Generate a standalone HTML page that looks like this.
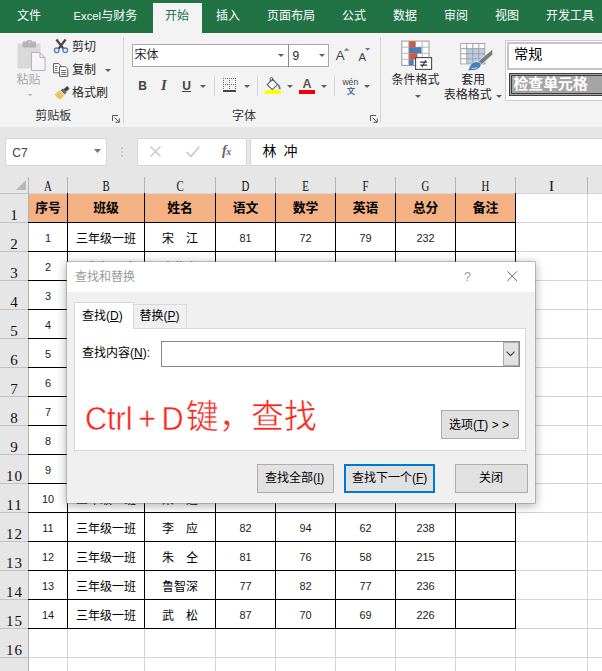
<!DOCTYPE html>
<html lang="zh-CN">
<head>
<meta charset="utf-8">
<title>Excel - 查找和替换</title>
<style>
html,body{margin:0;padding:0;width:602px;height:671px;overflow:hidden}
#app{position:absolute;left:0;top:0;width:602px;height:671px;overflow:hidden;background:#fff}
body{position:relative;background:#fff;
 font-family:"Liberation Sans","Noto Sans CJK SC",sans-serif;font-size:12px;line-height:1;color:#262626}
.a,.a>*{position:absolute}
.a>.z,.t>.z,.t{position:static}
.t{position:absolute;white-space:nowrap;line-height:1}
svg.i{position:absolute;overflow:visible}
/* tab bar */
#tabs{left:0;top:0;width:602px;height:33px;background:#217346;color:#fff}
#tabs .t{top:10px;font-size:12px}
#tabs .on{left:153px;top:3px;width:49px;height:30px;background:#f3f3f3}
/* ribbon */
#rib{left:0;top:33px;width:602px;height:94px;background:#f3f3f3;color:#262626}
#rib .sep{width:1px;background:#d2d2d2}
#rib .lbl{font-size:12px;color:#333}
/* formula bar */
#fx{left:0;top:127px;width:602px;height:49px;background:#e6e6e6}
#fx .box{background:#fff;top:11px;height:27px;border:1px solid #d6d6d6;box-sizing:border-box}
#rib .t{font-size:12px}
.ar{position:absolute;width:0;height:0;margin-left:-.3px;border-left:3.1px solid transparent;border-right:3.1px solid transparent;border-top:3.4px solid #5e5e5e}
#rib .vs{position:absolute;width:1px;background:#d4d4d4}
.lch{position:absolute;width:8px;height:8px}
/* grid */
#grid{left:0;top:0;width:602px;height:671px}
#grid .hb{background:#e6e6e6}
#grid .gv{top:193px;width:1px;height:478px;background:#d4d4d4}
#grid .gh{left:28px;width:574px;height:1px;background:#d4d4d4}
#grid .hv{top:177px;width:1px;height:16px;background:#b4b4b4}
#grid .hh{left:0;width:28px;height:1px;background:#c2c2c2}
#grid .hvl{top:193px;width:1px;height:478px;background:#b4b4b4}
#grid .ch{top:178.6px;text-align:center;font:15px/1 "Liberation Serif",serif;color:#111;transform:scaleX(.72)}
#grid .rn{left:0;width:28px;text-align:center;font:15px/1 "Liberation Serif",serif;color:#111;letter-spacing:1.2px;text-indent:1.2px}
#grid .th{background:#f4b183}
#grid .bv{top:193px;width:1px;height:436px;background:#000}
#grid .bh{left:28px;width:488px;height:1px;background:#000}
#grid .c{text-align:center;font-size:12px;line-height:1;color:#000;white-space:nowrap}
#grid .n{font:10.9px/12px "Liberation Sans",sans-serif;font-weight:normal;color:#1a1a1a}
/* formula bar */
#fx .t{color:#444}
/* dialog */
#dlg{left:67px;top:262px;width:468px;height:241px;background:#f0f0f0;
 box-shadow:0 0 0 1px rgba(140,140,140,.5),0 2px 9px 1px rgba(0,0,0,.3)}
#dlg .in{left:-1px;top:-1px;width:469px;height:242px}
#dlg .t{font-size:12px;color:#000}
#dlg .ttl{left:1px;top:1px;width:468px;height:29.5px;background:#fff}
#dlg .pg{background:#fff;border:1px solid #d9d9d9;box-sizing:border-box}
#dlg .btn{background:#e1e1e1;border:1px solid #adadad;box-sizing:border-box}
#dlg u{text-decoration:underline;text-underline-offset:1px}
#dlg .red{font-size:32.2px;color:#f5281c;-webkit-text-stroke:.45px #fff}
#grid .hd{font-size:12.8px;font-weight:bold}
#grid .ch.w{transform:none}

</style>
</head>
<body>
<div id="app">
<div id="tabs" class="a">
<div class="on"></div>
<span class="t" style="left:17px">文件</span>
<span class="t" style="left:73.5px"><span style="font-size:11.3px">Excel</span>与财务</span>
<span class="t" style="left:165px;color:#217346">开始</span>
<span class="t" style="left:216px">插入</span>
<span class="t" style="left:267px">页面布局</span>
<span class="t" style="left:342px">公式</span>
<span class="t" style="left:393px">数据</span>
<span class="t" style="left:444px">审阅</span>
<span class="t" style="left:495px">视图</span>
<span class="t" style="left:546px">开发工具</span>
</div>

<div id="rib" class="a">
<!-- clipboard group -->
<svg class="i" style="left:16px;top:7px" width="31" height="32" viewBox="0 0 31 32">
 <rect x="1.5" y="3.5" width="23" height="25" rx="1" fill="#d9d9d9"/>
 <rect x="6.5" y="1.5" width="13.5" height="6" rx="1" fill="#b4b4b4"/>
 <rect x="10.8" y="0" width="5" height="3" rx="1.2" fill="#b4b4b4"/><rect x="12.3" y="1.4" width="2" height="1.6" fill="#d9d9d9"/>
 <path d="M15.5 12.5h8.5l5 5v13h-13.5z" fill="#f7f4f8" stroke="#b8b1bb" stroke-width="1"/>
 <path d="M24 12.5v5h5" fill="none" stroke="#b8b1bb" stroke-width="1"/>
</svg>
<span class="t" style="left:16.5px;top:41px;color:#a8a8a8">粘贴</span>
<svg class="i" style="left:28.2px;top:61.2px" width="4.4" height="2.2" viewBox="0 0 4 2"><path d="M0 0h4L2 2z" fill="#b4b4b4"/></svg>
<!-- cut -->
<svg class="i" style="left:53px;top:6px" width="16" height="15" viewBox="0 0 16 15">
 <path d="M3.4 0.5L10.4 9.6M12.6 0.5L5.6 9.6" stroke="#444" stroke-width="2.2" fill="none"/>
 <circle cx="3.7" cy="11.3" r="2.3" fill="none" stroke="#4a7ebb" stroke-width="1.3"/>
 <circle cx="12.3" cy="11.3" r="2.3" fill="none" stroke="#4a7ebb" stroke-width="1.3"/>
</svg>
<span class="t" style="left:72px;top:8.4px">剪切</span>
<!-- copy -->
<svg class="i" style="left:52.5px;top:30px" width="16" height="14" viewBox="0 0 16 14">
 <path d="M0.6 0.6h5.2l2 2v7.2h-7.2z" fill="#fff" stroke="#5a5a5a" stroke-width="1"/>
 <path d="M6.6 3.6h5.6l2.6 2.6v7.2h-8.2z" fill="#fff" stroke="#5a5a5a" stroke-width="1"/>
 <path d="M2 3.5h2.5M2 5.5h2.5M2 7.5h2.5M8.2 7.5h5M8.2 9.5h5M8.2 11.5h5" stroke="#6a6a6a" stroke-width="1"/>
</svg>
<span class="t" style="left:72px;top:31.1px">复制</span>
<i class="ar" style="left:105.7px;top:36.3px"></i>
<!-- format painter -->
<svg class="i" style="left:53.5px;top:52.5px" width="16" height="14" viewBox="0 0 16 14">
 <path d="M9.5 3.2L13.2 0l2.3 2.4-3.4 3.4z" fill="#444"/>
 <path d="M6.6 4.2l2.4-1.6 3.6 3.8-1.6 2.2z" fill="#666"/>
 <path d="M0.4 8.2L6 4.6l4.6 4.6-4.2 4.6z" fill="#f0c866"/>
 <path d="M2 9.6l3.2 3.2M3.8 8.2l3.4 3.6" stroke="#d8a838" stroke-width=".8"/>
</svg>
<span class="t" style="left:72px;top:54px">格式刷</span>
<span class="t lbl" style="left:35.2px;top:77.2px">剪贴板</span>
<svg class="i" style="left:112px;top:81.8px" width="8" height="8" viewBox="0 0 8 8"><path d="M0.5 6V0.5H6M2.6 2.6L7 7M7.3 3.4V7.3H3.4" fill="none" stroke="#555" stroke-width="1"/></svg>
<i class="vs" style="left:123px;top:4px;height:86px"></i>

<!-- font group -->
<div style="left:131.5px;top:10.5px;width:197px;height:23px;background:#fff;border:1px solid #a9a9a9;box-sizing:border-box"></div>
<div style="left:288px;top:10.5px;width:1px;height:23px;background:#8a8a8a"></div>
<span class="t" style="left:134.4px;top:16.2px">宋体</span>
<i class="ar" style="left:278.7px;top:21px"></i>
<span class="t" style="left:292.5px;top:16.6px;font-size:12px">9</span>
<i class="ar" style="left:318.8px;top:21px"></i>
<span class="t" style="left:335.8px;top:16.2px;font-size:13.3px;color:#444">A</span>
<svg class="i" style="left:343.6px;top:14.8px" width="5.2" height="2.8" viewBox="0 0 6 3"><path d="M0 3L3 0l3 3z" fill="#4a7ebb"/></svg>
<span class="t" style="left:358.4px;top:18.6px;font-size:11.3px;color:#444">A</span>
<svg class="i" style="left:365.2px;top:14.8px" width="5.2" height="2.8" viewBox="0 0 6 3"><path d="M0 0h6L3 3z" fill="#4a7ebb"/></svg>

<span class="t" style="left:138.2px;top:46.9px;font-weight:bold;color:#444">B</span>
<span class="t" style="left:161px;top:45.3px;font-family:'Liberation Serif',serif;font-weight:bold;font-style:italic;font-size:14.5px;color:#444">I</span>
<span class="t" style="left:182.3px;top:46.9px;font-weight:bold;color:#444">U</span>
<div style="left:182px;top:57.8px;width:9.4px;height:1.2px;background:#444"></div>
<i class="ar" style="left:200.5px;top:52px"></i>
<i class="vs" style="left:214px;top:43px;height:20px"></i>
<svg class="i" style="left:223px;top:45px" width="13" height="14" viewBox="0 0 13 14" shape-rendering="crispEdges">
 <path d="M0 0.5h13M0 6.5h13M0.5 0v13M6.5 0v13M12.5 0v13" stroke="#6a6a6a" stroke-width="1" stroke-dasharray="1 1" fill="none"/>
 <path d="M0 13h13" stroke="#444" stroke-width="1.4"/>
</svg>
<i class="ar" style="left:244px;top:52px"></i>
<i class="vs" style="left:257px;top:43px;height:20px"></i>
<!-- fill colour -->
<svg class="i" style="left:264px;top:44px" width="18" height="17" viewBox="0 0 18 17">
 <path d="M3.2 7.6L8.6 2.4l5 5.2-5.4 5z" fill="#fff" stroke="#555" stroke-width="1.1"/>
 <path d="M6.2 4.6V1.8a1.3 1.3 0 0 1 2.6 0V4" fill="none" stroke="#555" stroke-width="1"/>
 <path d="M13.4 6.4c2 1 3.2 2.8 3.2 5 0 1.2-1.8 1.2-1.9 0-.1-1.5-.5-2.7-1.3-3.6z" fill="#4a7ebb"/>
 <rect x="0.7" y="13.2" width="16.6" height="3.8" fill="#ffff00"/>
</svg>
<i class="ar" style="left:286.8px;top:52px"></i>
<!-- font colour -->
<span class="t" style="left:302.6px;top:45px;font-size:12.5px;color:#555;font-weight:bold">A</span>
<div style="left:299.3px;top:57.2px;width:15.8px;height:3.8px;background:#f00000"></div>
<i class="ar" style="left:320.8px;top:52px"></i>
<i class="vs" style="left:334px;top:43px;height:20px"></i>
<!-- wen -->
<span class="t" style="left:342.4px;top:44.5px;font-size:8.6px;color:#444">w&eacute;n</span>
<span class="t" style="left:346.8px;top:53.5px;font-size:8.3px;color:#3a6db0;font-weight:bold">文</span>
<i class="ar" style="left:364px;top:52px"></i>
<span class="t lbl" style="left:232px;top:77.2px">字体</span>
<svg class="i" style="left:369.5px;top:81.8px" width="8" height="8" viewBox="0 0 8 8"><path d="M0.5 6V0.5H6M2.6 2.6L7 7M7.3 3.4V7.3H3.4" fill="none" stroke="#555" stroke-width="1"/></svg>
<i class="vs" style="left:380px;top:4px;height:86px"></i>

<!-- styles group -->
<svg class="i" style="left:400.5px;top:7px" width="32" height="30" viewBox="0 0 32 30">
 <rect x="0.8" y="1.1" width="27.2" height="24.3" fill="#fff" stroke="#999"/>
 <path d="M7.6 1.1v24.3M14.4 1.1v24.3M21.2 1.1v24.3M0.8 7.2h27.2M0.8 13.3h27.2M0.8 19.3h27.2" stroke="#b9b9b9" stroke-width="1" fill="none"/>
 <rect x="8.1" y="1.2" width="6.3" height="6" fill="#d8573c"/>
 <rect x="8.1" y="7.2" width="12.4" height="6.1" fill="#4a7ebb"/>
 <rect x="8.1" y="13.3" width="8.4" height="6" fill="#d8573c"/>
 <rect x="8.1" y="19.3" width="4.6" height="6" fill="#4a7ebb"/>
 <rect x="14.6" y="17.6" width="16" height="11.8" fill="#fff" stroke="#4a4a4a" stroke-width="1.1"/>
 <path d="M19.2 22.1h7M19.2 25.1h7M24.9 19.9l-4 7.4" stroke="#333" stroke-width="1.1" fill="none"/>
</svg>
<span class="t" style="left:391.5px;top:41px">条件格式</span>
<i class="ar" style="left:415.2px;top:61.5px"></i>
<svg class="i" style="left:459.5px;top:10px" width="34" height="29" viewBox="0 0 34 29">
 <rect x="0.8" y="0.6" width="24" height="20.3" fill="#b9cde5" stroke="#a0a0a0"/>
 <rect x="1.3" y="1.1" width="5.5" height="19.3" fill="#fff"/><rect x="1.3" y="1.1" width="23" height="4.6" fill="#fff"/>
 <path d="M6.8 0.6v20.3M12.8 0.6v20.3M18.8 0.6v20.3M0.8 5.7h24M0.8 10.8h24M0.8 15.8h24" stroke="#a0a0a0" stroke-width="1" fill="none"/>
 <path d="M32.6 6.2v5.6L21.4 21.4l-3.2-3z" fill="#7a7a7a" stroke="#f3f3f3" stroke-width=".6"/>
 <path d="M19.8 19.3c-5-1.6-8.2.4-9.700 3.500-.7 1.800-1.500 3.500-2.300 4.500 4.600.9 9.800-.1 12.400-3.200 1.200-1.500 1-3.500-.4-4.800z" fill="#4a7ebb" stroke="#f3f3f3" stroke-width=".6"/>
 <path d="M11.5 25.2c2.200.4 4.200 0 5.800-1" stroke="#a9c6e8" stroke-width="1.1" fill="none"/>
</svg>
<span class="t" style="left:461.2px;top:41px">套用</span>
<span class="t" style="left:443.8px;top:56.1px">表格格式</span>
<i class="ar" style="left:496px;top:61.5px"></i>
<!-- cell style gallery -->
<div style="left:505px;top:6.5px;width:110px;height:61px;background:#fff;border:1px solid #cdcdcd;box-sizing:border-box"></div>
<div style="left:506.5px;top:8.5px;width:110px;height:28px;background:#fff;border:2.5px solid #c4c4c4;box-sizing:border-box"></div>
<span class="t ns" style="left:514px;top:14.4px;font-size:14.2px;color:#000">常规</span>
<div style="left:509px;top:40px;width:110px;height:22.5px;background:#a5a5a5;border:3px double #3f3f3f;box-sizing:border-box"></div>
<span class="t ns" style="left:513.4px;top:43.6px;font-size:14.9px;color:#fff;font-weight:bold">检查单元格</span>
<i class="ar" style="left:496.5px;top:61px;display:none"></i>
</div>

<div id="fx" class="a">
<div class="box" style="left:5px;top:10.6px;width:102px;height:28.4px"></div>
<span class="t" style="left:12.3px;top:20px;font-size:12px">C7</span>
<svg class="i" style="left:93.5px;top:22px" width="7" height="4" viewBox="0 0 7 4"><path d="M0 0h7L3.5 4z" fill="#777"/></svg>
<svg class="i" style="left:121px;top:20px" width="2" height="10" viewBox="0 0 2 10"><circle cx="1" cy="1" r=".9" fill="#bdbdbd"/><circle cx="1" cy="5" r=".9" fill="#bdbdbd"/><circle cx="1" cy="9" r=".9" fill="#bdbdbd"/></svg>
<div class="box" style="left:136.5px;top:10.6px;width:110px;height:28.4px"></div>
<svg class="i" style="left:150.3px;top:19.4px" width="11" height="11" viewBox="0 0 11 11"><path d="M0.5 0.5l10 10M10.5 0.5l-10 10" stroke="#c6c6c6" stroke-width="1.3" fill="none"/></svg>
<svg class="i" style="left:185.5px;top:19.4px" width="14" height="11" viewBox="0 0 14 11"><path d="M0.7 6l4.3 4.3L13.3 0.7" stroke="#c6c6c6" stroke-width="1.5" fill="none"/></svg>
<span class="t" style="left:222px;top:17px;font:italic bold 14px/1 'Liberation Serif',serif;color:#666">f<span style="font-size:10px;margin-left:-.5px">x</span></span>
<div class="box" style="left:250px;top:10.6px;width:360px;height:28.4px"></div>
<span class="t" style="left:262.6px;top:16.7px;font-size:14px;color:#000;word-spacing:3px">林 冲</span>
</div>

<div id="grid" class="a">
<div class="hb" style="left:0;top:176px;width:602px;height:17px"></div>
<div class="hb" style="left:0;top:176px;width:28px;height:495px"></div>
<svg class="i" style="left:16px;top:180px" width="10" height="10" viewBox="0 0 10 10"><path d="M10 0v10H0z" fill="#b7b7b7"/></svg>
<i class="gv" style="left:67px"></i>
<i class="gv" style="left:144px"></i>
<i class="gv" style="left:215px"></i>
<i class="gv" style="left:275px"></i>
<i class="gv" style="left:335px"></i>
<i class="gv" style="left:395px"></i>
<i class="gv" style="left:455px"></i>
<i class="gv" style="left:515px"></i>
<i class="gv" style="left:587px"></i>
<i class="gh" style="top:193px"></i>
<i class="gh" style="top:222px"></i>
<i class="gh" style="top:251px"></i>
<i class="gh" style="top:280px"></i>
<i class="gh" style="top:309px"></i>
<i class="gh" style="top:338px"></i>
<i class="gh" style="top:367px"></i>
<i class="gh" style="top:396px"></i>
<i class="gh" style="top:425px"></i>
<i class="gh" style="top:454px"></i>
<i class="gh" style="top:483px"></i>
<i class="gh" style="top:512px"></i>
<i class="gh" style="top:541px"></i>
<i class="gh" style="top:570px"></i>
<i class="gh" style="top:599px"></i>
<i class="gh" style="top:628px"></i>
<i class="gh" style="top:657px"></i>
<i class="gh" style="top:686px"></i>
<i class="hv" style="left:28px"></i>
<span class="ch" style="left:29px;width:38px">A</span>
<i class="hv" style="left:67px"></i>
<span class="ch" style="left:68px;width:76px">B</span>
<i class="hv" style="left:144px"></i>
<span class="ch" style="left:145px;width:70px">C</span>
<i class="hv" style="left:215px"></i>
<span class="ch" style="left:216px;width:59px">D</span>
<i class="hv" style="left:275px"></i>
<span class="ch" style="left:276px;width:59px">E</span>
<i class="hv" style="left:335px"></i>
<span class="ch" style="left:336px;width:59px">F</span>
<i class="hv" style="left:395px"></i>
<span class="ch" style="left:396px;width:59px">G</span>
<i class="hv" style="left:455px"></i>
<span class="ch" style="left:456px;width:59px">H</span>
<i class="hv" style="left:515px"></i>
<span class="ch w" style="left:516px;width:71px">I</span>
<i class="hv" style="left:587px"></i>
<span class="ch w" style="left:588px;width:82px">J</span>
<i class="hh" style="top:222px"></i>
<span class="rn" style="top:207.7px">1</span>
<i class="hh" style="top:251px"></i>
<span class="rn" style="top:236.7px">2</span>
<i class="hh" style="top:280px"></i>
<span class="rn" style="top:265.7px">3</span>
<i class="hh" style="top:309px"></i>
<span class="rn" style="top:294.7px">4</span>
<i class="hh" style="top:338px"></i>
<span class="rn" style="top:323.7px">5</span>
<i class="hh" style="top:367px"></i>
<span class="rn" style="top:352.7px">6</span>
<i class="hh" style="top:396px"></i>
<span class="rn" style="top:381.7px">7</span>
<i class="hh" style="top:425px"></i>
<span class="rn" style="top:410.7px">8</span>
<i class="hh" style="top:454px"></i>
<span class="rn" style="top:439.7px">9</span>
<i class="hh" style="top:483px"></i>
<span class="rn" style="top:468.7px">10</span>
<i class="hh" style="top:512px"></i>
<span class="rn" style="top:497.7px">11</span>
<i class="hh" style="top:541px"></i>
<span class="rn" style="top:526.7px">12</span>
<i class="hh" style="top:570px"></i>
<span class="rn" style="top:555.7px">13</span>
<i class="hh" style="top:599px"></i>
<span class="rn" style="top:584.7px">14</span>
<i class="hh" style="top:628px"></i>
<span class="rn" style="top:613.7px">15</span>
<i class="hh" style="top:657px"></i>
<span class="rn" style="top:642.7px">16</span>
<i class="hh" style="top:686px"></i>
<span class="rn" style="top:671.7px">17</span>
<i class="hh" style="top:193px"></i>
<i class="hvl" style="left:28px"></i>
<div class="th" style="left:29px;top:194px;width:486px;height:28px"></div>
<i class="bv" style="left:67px"></i>
<i class="bv" style="left:144px"></i>
<i class="bv" style="left:215px"></i>
<i class="bv" style="left:275px"></i>
<i class="bv" style="left:335px"></i>
<i class="bv" style="left:395px"></i>
<i class="bv" style="left:455px"></i>
<i class="bv" style="left:515px"></i>
<i class="bh" style="top:222px"></i>
<i class="bh" style="top:251px"></i>
<i class="bh" style="top:280px"></i>
<i class="bh" style="top:309px"></i>
<i class="bh" style="top:338px"></i>
<i class="bh" style="top:367px"></i>
<i class="bh" style="top:396px"></i>
<i class="bh" style="top:425px"></i>
<i class="bh" style="top:454px"></i>
<i class="bh" style="top:483px"></i>
<i class="bh" style="top:512px"></i>
<i class="bh" style="top:541px"></i>
<i class="bh" style="top:570px"></i>
<i class="bh" style="top:599px"></i>
<i class="bh" style="top:628px"></i>
<span class="c hd" style="left:29px;top:202.3px;width:38px">序号</span>
<span class="c hd" style="left:68px;top:202.3px;width:76px">班级</span>
<span class="c hd" style="left:145px;top:202.3px;width:70px">姓名</span>
<span class="c hd" style="left:216px;top:202.3px;width:59px">语文</span>
<span class="c hd" style="left:276px;top:202.3px;width:59px">数学</span>
<span class="c hd" style="left:336px;top:202.3px;width:59px">英语</span>
<span class="c hd" style="left:396px;top:202.3px;width:59px">总分</span>
<span class="c hd" style="left:456px;top:202.3px;width:59px">备注</span>
<span class="c" style="left:29px;top:231.5px;width:38px"><b class="n">1</b></span>
<span class="c" style="left:68px;top:232.5px;width:76px">三年级一班</span>
<span class="c" style="left:145px;top:232.5px;width:70px">宋　江</span>
<span class="c" style="left:216px;top:231.5px;width:59px"><b class="n">81</b></span>
<span class="c" style="left:276px;top:231.5px;width:59px"><b class="n">72</b></span>
<span class="c" style="left:336px;top:231.5px;width:59px"><b class="n">79</b></span>
<span class="c" style="left:396px;top:231.5px;width:59px"><b class="n">232</b></span>
<span class="c" style="left:29px;top:260.5px;width:38px"><b class="n">2</b></span>
<span class="c" style="left:68px;top:261.5px;width:76px">三年级一班</span>
<span class="c" style="left:145px;top:261.5px;width:70px">卢俊义</span>
<span class="c" style="left:29px;top:289.5px;width:38px"><b class="n">3</b></span>
<span class="c" style="left:68px;top:290.5px;width:76px">三年级一班</span>
<span class="c" style="left:145px;top:290.5px;width:70px">吴　用</span>
<span class="c" style="left:29px;top:318.5px;width:38px"><b class="n">4</b></span>
<span class="c" style="left:68px;top:319.5px;width:76px">三年级一班</span>
<span class="c" style="left:145px;top:319.5px;width:70px">公孙胜</span>
<span class="c" style="left:29px;top:347.5px;width:38px"><b class="n">5</b></span>
<span class="c" style="left:68px;top:348.5px;width:76px">三年级一班</span>
<span class="c" style="left:145px;top:348.5px;width:70px">关　胜</span>
<span class="c" style="left:29px;top:376.5px;width:38px"><b class="n">6</b></span>
<span class="c" style="left:68px;top:377.5px;width:76px">三年级一班</span>
<span class="c" style="left:145px;top:377.5px;width:70px">林　冲</span>
<span class="c" style="left:29px;top:405.5px;width:38px"><b class="n">7</b></span>
<span class="c" style="left:68px;top:406.5px;width:76px">三年级一班</span>
<span class="c" style="left:145px;top:406.5px;width:70px">秦　明</span>
<span class="c" style="left:29px;top:434.5px;width:38px"><b class="n">8</b></span>
<span class="c" style="left:68px;top:435.5px;width:76px">三年级一班</span>
<span class="c" style="left:145px;top:435.5px;width:70px">呼延灼</span>
<span class="c" style="left:29px;top:463.5px;width:38px"><b class="n">9</b></span>
<span class="c" style="left:68px;top:464.5px;width:76px">三年级一班</span>
<span class="c" style="left:145px;top:464.5px;width:70px">花　荣</span>
<span class="c" style="left:29px;top:492.5px;width:38px"><b class="n">10</b></span>
<span class="c" style="left:68px;top:493.5px;width:76px">三年级一班</span>
<span class="c" style="left:145px;top:493.5px;width:70px">柴　进</span>
<span class="c" style="left:29px;top:521.5px;width:38px"><b class="n">11</b></span>
<span class="c" style="left:68px;top:522.5px;width:76px">三年级一班</span>
<span class="c" style="left:145px;top:522.5px;width:70px">李　应</span>
<span class="c" style="left:216px;top:521.5px;width:59px"><b class="n">82</b></span>
<span class="c" style="left:276px;top:521.5px;width:59px"><b class="n">94</b></span>
<span class="c" style="left:336px;top:521.5px;width:59px"><b class="n">62</b></span>
<span class="c" style="left:396px;top:521.5px;width:59px"><b class="n">238</b></span>
<span class="c" style="left:29px;top:550.5px;width:38px"><b class="n">12</b></span>
<span class="c" style="left:68px;top:551.5px;width:76px">三年级一班</span>
<span class="c" style="left:145px;top:551.5px;width:70px">朱　仝</span>
<span class="c" style="left:216px;top:550.5px;width:59px"><b class="n">81</b></span>
<span class="c" style="left:276px;top:550.5px;width:59px"><b class="n">76</b></span>
<span class="c" style="left:336px;top:550.5px;width:59px"><b class="n">58</b></span>
<span class="c" style="left:396px;top:550.5px;width:59px"><b class="n">215</b></span>
<span class="c" style="left:29px;top:579.5px;width:38px"><b class="n">13</b></span>
<span class="c" style="left:68px;top:580.5px;width:76px">三年级一班</span>
<span class="c" style="left:145px;top:580.5px;width:70px">鲁智深</span>
<span class="c" style="left:216px;top:579.5px;width:59px"><b class="n">77</b></span>
<span class="c" style="left:276px;top:579.5px;width:59px"><b class="n">82</b></span>
<span class="c" style="left:336px;top:579.5px;width:59px"><b class="n">77</b></span>
<span class="c" style="left:396px;top:579.5px;width:59px"><b class="n">236</b></span>
<span class="c" style="left:29px;top:608.5px;width:38px"><b class="n">14</b></span>
<span class="c" style="left:68px;top:609.5px;width:76px">三年级一班</span>
<span class="c" style="left:145px;top:609.5px;width:70px">武　松</span>
<span class="c" style="left:216px;top:608.5px;width:59px"><b class="n">87</b></span>
<span class="c" style="left:276px;top:608.5px;width:59px"><b class="n">70</b></span>
<span class="c" style="left:336px;top:608.5px;width:59px"><b class="n">69</b></span>
<span class="c" style="left:396px;top:608.5px;width:59px"><b class="n">226</b></span>
</div>
<div id="dlg" class="a">
<div class="a in">
<div class="ttl"></div>
<span class="t" style="left:9px;top:10px;color:#9a9a9a">查找和替换</span>
<span class="t" style="left:398px;top:10px;color:#9a9a9a;font-size:12.5px">?</span>
<svg class="i" style="left:440.6px;top:10px" width="10.4" height="10.4" viewBox="0 0 10.4 10.4"><path d="M0.3 0.3l9.8 9.8M10.1 0.3L0.3 10.1" stroke="#686868" stroke-width="1" fill="none"/></svg>
<!-- tabs -->
<div class="pg" style="left:67px;top:42.5px;width:54px;height:25.5px;background:#f0f0f0"></div>
<div class="pg" style="left:7.5px;top:66.5px;width:452.5px;height:123.5px"></div>
<div class="pg" style="left:7.5px;top:40.5px;width:60px;height:27.5px;border-bottom:none"></div>
<span class="t" style="left:16px;top:48.5px">查找(<u>D</u>)</span>
<span class="t" style="left:73.5px;top:48.5px">替换(<u>P</u>)</span>
<span class="t" style="left:16px;top:86px">查找内容(<u>N</u>):</span>
<!-- combo -->
<div style="left:94.5px;top:80px;width:359px;height:26px;background:#fff;border:1px solid #8a8a8a;box-sizing:border-box"></div>
<div class="btn" style="left:436.5px;top:81px;width:16px;height:24px"></div>
<svg class="i" style="left:440px;top:90px" width="9" height="6" viewBox="0 0 9 6"><path d="M0.5 0.7l4 4 4-4" stroke="#444" stroke-width="1.2" fill="none"/></svg>
<!-- annotation -->
<span class="t red" style="left:19.2px;top:139.8px;font-size:34px;transform:scaleX(.9);transform-origin:0 0">Ctrl<span style="margin:0 6px 0 6.3px">+</span>D</span>
<span class="t red" style="left:120px;top:140.4px;font-size:32.7px">键，查找</span>
<!-- buttons -->
<div class="btn" style="left:374.5px;top:149px;width:78px;height:28.5px"></div>
<span class="t" style="left:383px;top:157.5px">选项(<u>T</u>) &gt; &gt;</span>
<div class="btn" style="left:191px;top:202.5px;width:76.5px;height:29px"></div>
<span class="t" style="left:199px;top:211px">查找全部(<u>I</u>)</span>
<div class="btn" style="left:278px;top:202.5px;width:90.5px;height:29px;border:2px solid #0078d7"></div>
<span class="t" style="left:286px;top:211px">查找下一个(<u>F</u>)</span>
<div class="btn" style="left:388.5px;top:202.5px;width:73px;height:29px"></div>
<span class="t" style="left:413px;top:211px">关闭</span>
</div>
</div>

</div>
</body>
</html>
